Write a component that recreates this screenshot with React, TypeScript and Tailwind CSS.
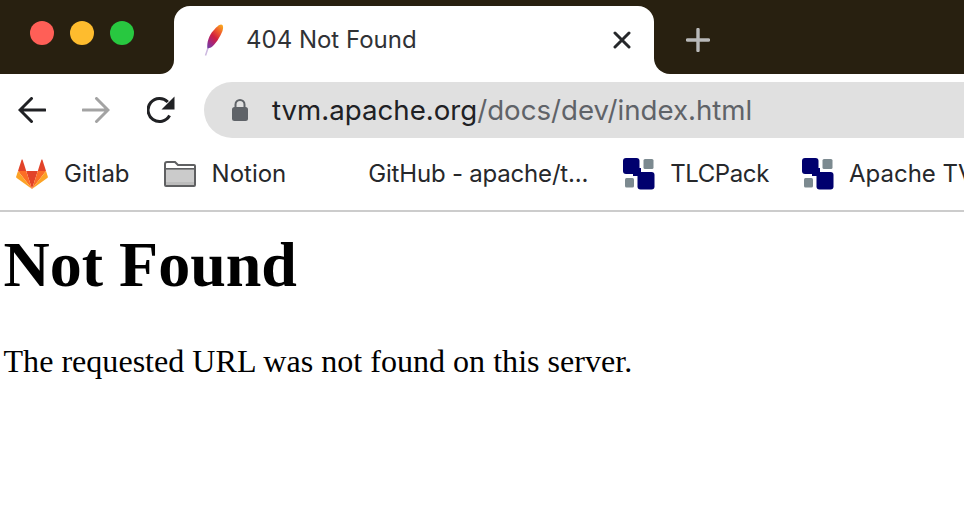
const uiFont = 'font-["Inter","Noto_Sans",sans-serif]';

function Feather() {
  return (
    <svg width="20" height="32" viewBox="0 0 20 32" className="shrink-0">
      <defs>
        <linearGradient id="feather" x1="0.85" y1="0" x2="0.2" y2="1">
          <stop offset="0" stopColor="#f9a51f" />
          <stop offset="0.28" stopColor="#ee5a2c" />
          <stop offset="0.55" stopColor="#d01f3f" />
          <stop offset="0.8" stopColor="#a5257a" />
          <stop offset="1" stopColor="#7a3a9e" />
        </linearGradient>
      </defs>
      <path d="M1.5 31.5 L5 21" stroke="#cdb9e0" strokeWidth="1.5" fill="none" />
      <path d="M17 0.5 C19.5 0.5 19.5 4 18.5 7 C16 13 11.5 20.5 7 23.5 L3.5 24.5 C2.5 19 5 11 9.5 6.5 C12 3.5 15 0.5 17 0.5 Z" fill="url(#feather)" />
    </svg>
  );
}

function GitlabLogo() {
  return (
    <svg width="32" height="30" viewBox="0 0 32 30" className="shrink-0">
      <path d="M16 30 L10.2 12 H21.8 Z" fill="#e24329" />
      <path d="M16 30 L10.2 12 H2 Z" fill="#fc6d26" />
      <path d="M2 12 L0.2 17.4 C0 18 0.2 18.6 0.7 19 L16 30 Z" fill="#fca326" />
      <path d="M2 12 H10.2 L6.7 1 C6.5 0.4 5.7 0.4 5.5 1 Z" fill="#e24329" />
      <path d="M16 30 L21.8 12 H30 Z" fill="#fc6d26" />
      <path d="M30 12 L31.8 17.4 C32 18 31.8 18.6 31.3 19 L16 30 Z" fill="#fca326" />
      <path d="M30 12 H21.8 L25.3 1 C25.5 0.4 26.3 0.4 26.5 1 Z" fill="#e24329" />
    </svg>
  );
}

function FolderIcon() {
  return (
    <svg width="32" height="26" viewBox="0 0 32 26" className="shrink-0">
      <path d="M1 3 C1 2 2 1 3 1 H11 L14 4 H30 C30.6 4 31 4.4 31 5 V24 C31 24.6 30.6 25 30 25 H2 C1.4 25 1 24.6 1 24 Z" fill="#fff" stroke="#5f6062" strokeWidth="2" />
      <rect x="2" y="8" width="28" height="16" fill="#cbcbcb" />
      <rect x="2" y="7" width="28" height="1.6" fill="#5f6062" />
      <rect x="2" y="21" width="28" height="3" fill="#bcbcbc" />
    </svg>
  );
}

function TlcLogo() {
  return (
    <svg width="32" height="32" viewBox="0 0 32 32" className="shrink-0">
      <rect x="0" y="0" width="16.5" height="16" rx="3" fill="#00006e" />
      <rect x="14.5" y="14" width="17" height="17.5" rx="3" fill="#00006e" />
      <rect x="10" y="10" width="8" height="8" fill="#00006e" />
      <rect x="20.5" y="1" width="10" height="10" rx="1.5" fill="#7c8a90" />
      <rect x="2" y="20" width="9" height="9.5" rx="1.5" fill="#7c8a90" />
    </svg>
  );
}

// Chrome's back/forward arrow, flipped for forward
function NavArrow({ color, flip }: { color: string; flip?: boolean }) {
  return (
    <svg width="28" height="26" viewBox="0 0 28 26" fill="none" className={`shrink-0 ${flip ? '-scale-x-100' : ''}`}>
      <path d="M27 13 H2.5 M13.5 1.5 L2 13 L13.5 24.5" stroke={color} strokeWidth="3" strokeLinecap="round" />
    </svg>
  );
}

function ReloadIcon() {
  return (
    <svg width="28" height="28" viewBox="0 0 28 28" fill="none" className="shrink-0">
      <path d="M22.6 19.6 A11.5 11.5 0 1 1 20.8 6" stroke="#202124" strokeWidth="3" />
      <path d="M27.5 0.5 V13.5 H14.5 Z" fill="#202124" />
    </svg>
  );
}

function TabClose() {
  return (
    <svg width="18" height="18" viewBox="0 0 18 18" fill="none" className="shrink-0">
      <path d="M2 2 L16 16 M16 2 L2 16" stroke="#26282b" strokeWidth="3" strokeLinecap="round" />
    </svg>
  );
}

function TabPlus() {
  return (
    <svg width="24" height="24" viewBox="0 0 24 24" fill="none" className="shrink-0">
      <path d="M12 1.5 V22.5 M1.5 12 H22.5" stroke="#b9b9b9" strokeWidth="3.4" strokeLinecap="round" />
    </svg>
  );
}

function Bookmark({ icon, label, className }: { icon?: React.ReactNode; label: string; className: string }) {
  return (
    <div className={`flex items-center shrink-0 ${className}`}>
      {icon}
      <span className="text-[24px] leading-none text-[#26282b] whitespace-nowrap">{label}</span>
    </div>
  );
}

export default function App() {
  return (
    <div className="w-[964px] h-[522px] overflow-hidden bg-white">
      {/* Tab strip */}
      <div className={`flex h-[74px] bg-white ${uiFont}`}>
        <div className="w-[174px] bg-[#282010] rounded-br-[14px] flex items-center gap-[16px] pl-[30px] pb-[8px]">
          <span className="w-6 h-6 rounded-full bg-[#ff5f57]" />
          <span className="w-6 h-6 rounded-full bg-[#febc2e]" />
          <span className="w-6 h-6 rounded-full bg-[#28c840]" />
        </div>
        <div className="w-[480px] bg-[#282010] pt-[6px]">
          <div className="h-[68px] bg-white rounded-t-[16px] flex items-center pl-[30px] pr-[23px]">
            <Feather />
            <span className="ml-[22px] text-[24px] leading-none text-[#303236] flex-1">404 Not Found</span>
            <TabClose />
          </div>
        </div>
        <div className="flex-1 bg-[#282010] rounded-bl-[16px] flex items-center pl-[32px] pt-[6px]">
          <TabPlus />
        </div>
      </div>

      {/* Toolbar */}
      <div className={`flex items-center h-[72px] pl-[18px] ${uiFont}`}>
        <NavArrow color="#202124" />
        <div className="ml-[36px]">
          <NavArrow color="#a3a3a3" flip />
        </div>
        <div className="ml-[37px]">
          <ReloadIcon />
        </div>
        <div className="ml-[29px] flex-1 h-[56px] rounded-l-[28px] bg-[#e0e0e0] flex items-center pl-[27px]">
          <svg width="18" height="24" viewBox="0 0 18 24" className="shrink-0">
            <path d="M4.5 10 V6.5 A4.5 4.5 0 0 1 13.5 6.5 V10" fill="none" stroke="#5f6368" strokeWidth="2" />
            <rect x="1" y="9" width="16" height="14" rx="2.5" fill="#5f6368" />
          </svg>
          <span className="ml-[23px] pt-[1px] text-[27.65px] leading-none whitespace-nowrap text-[#5f6368]">
            <span className="text-[#202124]">tvm.apache.org</span>/docs/dev/index.html
          </span>
        </div>
      </div>

      {/* Bookmarks bar */}
      <div className={`flex items-center h-[66px] overflow-hidden border-b-2 border-[#cccccc] pl-[16px] pb-[8px] ${uiFont}`}>
        <Bookmark icon={<GitlabLogo />} label="Gitlab" className="gap-[16px]" />
        <Bookmark icon={<FolderIcon />} label="Notion" className="ml-[34px] gap-[16px]" />
        <Bookmark label="GitHub - apache/t..." className="ml-[82px] tracking-[-0.2px]" />
        <Bookmark icon={<TlcLogo />} label="TLCPack" className="ml-[35px] gap-[15px] tracking-[-0.4px]" />
        <Bookmark icon={<TlcLogo />} label="Apache TVM" className="ml-[33px] gap-[15px]" />
      </div>

      {/* Page body */}
      <main className='pl-[3.5px] text-black font-["Liberation_Serif",serif]'>
        <h1 className="mt-[16px] text-[64px] leading-[74px] font-bold">Not Found</h1>
        <p className="mt-[41px] text-[32.1px] leading-[37px]">The requested URL was not found on this server.</p>
      </main>
    </div>
  );
}
